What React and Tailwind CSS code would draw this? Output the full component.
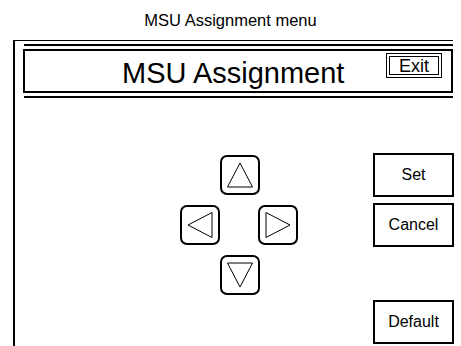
import React from 'react';

const ArrowButton = ({ points, className = '' }) => (
    <button className={`w-[40px] h-[40px] border-2 border-black rounded-[7px] bg-white flex items-center justify-center p-0 ${className}`}>
        <svg width="36" height="36" viewBox="0 0 36 36" fill="none">
            <polygon points={points} stroke="#000" strokeWidth="1" fill="#fff" />
        </svg>
    </button>
);

const MenuButton = ({ label, className = '' }) => (
    <button className={`w-[81px] h-[44px] border-2 border-black bg-white text-[16px] flex items-center justify-center ${className}`}>
        {label}
    </button>
);

const App = () => {
    return (
        <div className="w-[461px] h-[346px] bg-white overflow-hidden text-black font-['Liberation_Sans',Arial,sans-serif]">
            <div className="h-[40px] flex items-center justify-center text-[16.5px] pt-[1px]">
                MSU Assignment menu
            </div>

            <div className="ml-[13px] w-[440px] h-[306px] border-l-2 border-t border-black pl-[8px]">
                <div className="mt-[3px] ml-[1px] border-t-2 border-black" />

                {/* header */}
                <div className="mt-[3px] h-[44px] border-2 border-black flex items-start">
                    <span className="ml-[97px] mt-[6px] text-[29px] leading-[32px]">MSU Assignment</span>
                    <div className="ml-auto mr-[9px] mt-[2px] w-[56px] h-[25px] border border-black p-[2px]">
                        <div className="w-full h-full border border-black flex items-center justify-center text-[18px] leading-none">
                            Exit
                        </div>
                    </div>
                </div>

                <div className="mt-[3px] ml-[1px] border-t-2 border-black" />

                {/* content */}
                <div className="flex">
                    <div className="ml-[157px] mt-[57px] grid grid-cols-[40px_38px_40px] grid-rows-[40px_40px_40px] gap-y-[10px] h-fit">
                        <div />
                        <ArrowButton points="18,6 5.5,30 30.5,30" />
                        <div />
                        <ArrowButton points="6,18 30,5.5 30,30.5" />
                        <div />
                        <ArrowButton points="30,18 6,5.5 6,30.5" />
                        <div />
                        <ArrowButton points="18,30 5.5,6 30.5,6" />
                        <div />
                    </div>

                    <div className="ml-[75px] mt-[55px] flex flex-col">
                        <MenuButton label="Set" />
                        <MenuButton label="Cancel" className="mt-[6px]" />
                        <MenuButton label="Default" className="mt-[53px]" />
                    </div>
                </div>
            </div>
        </div>
    );
};

export default App;
